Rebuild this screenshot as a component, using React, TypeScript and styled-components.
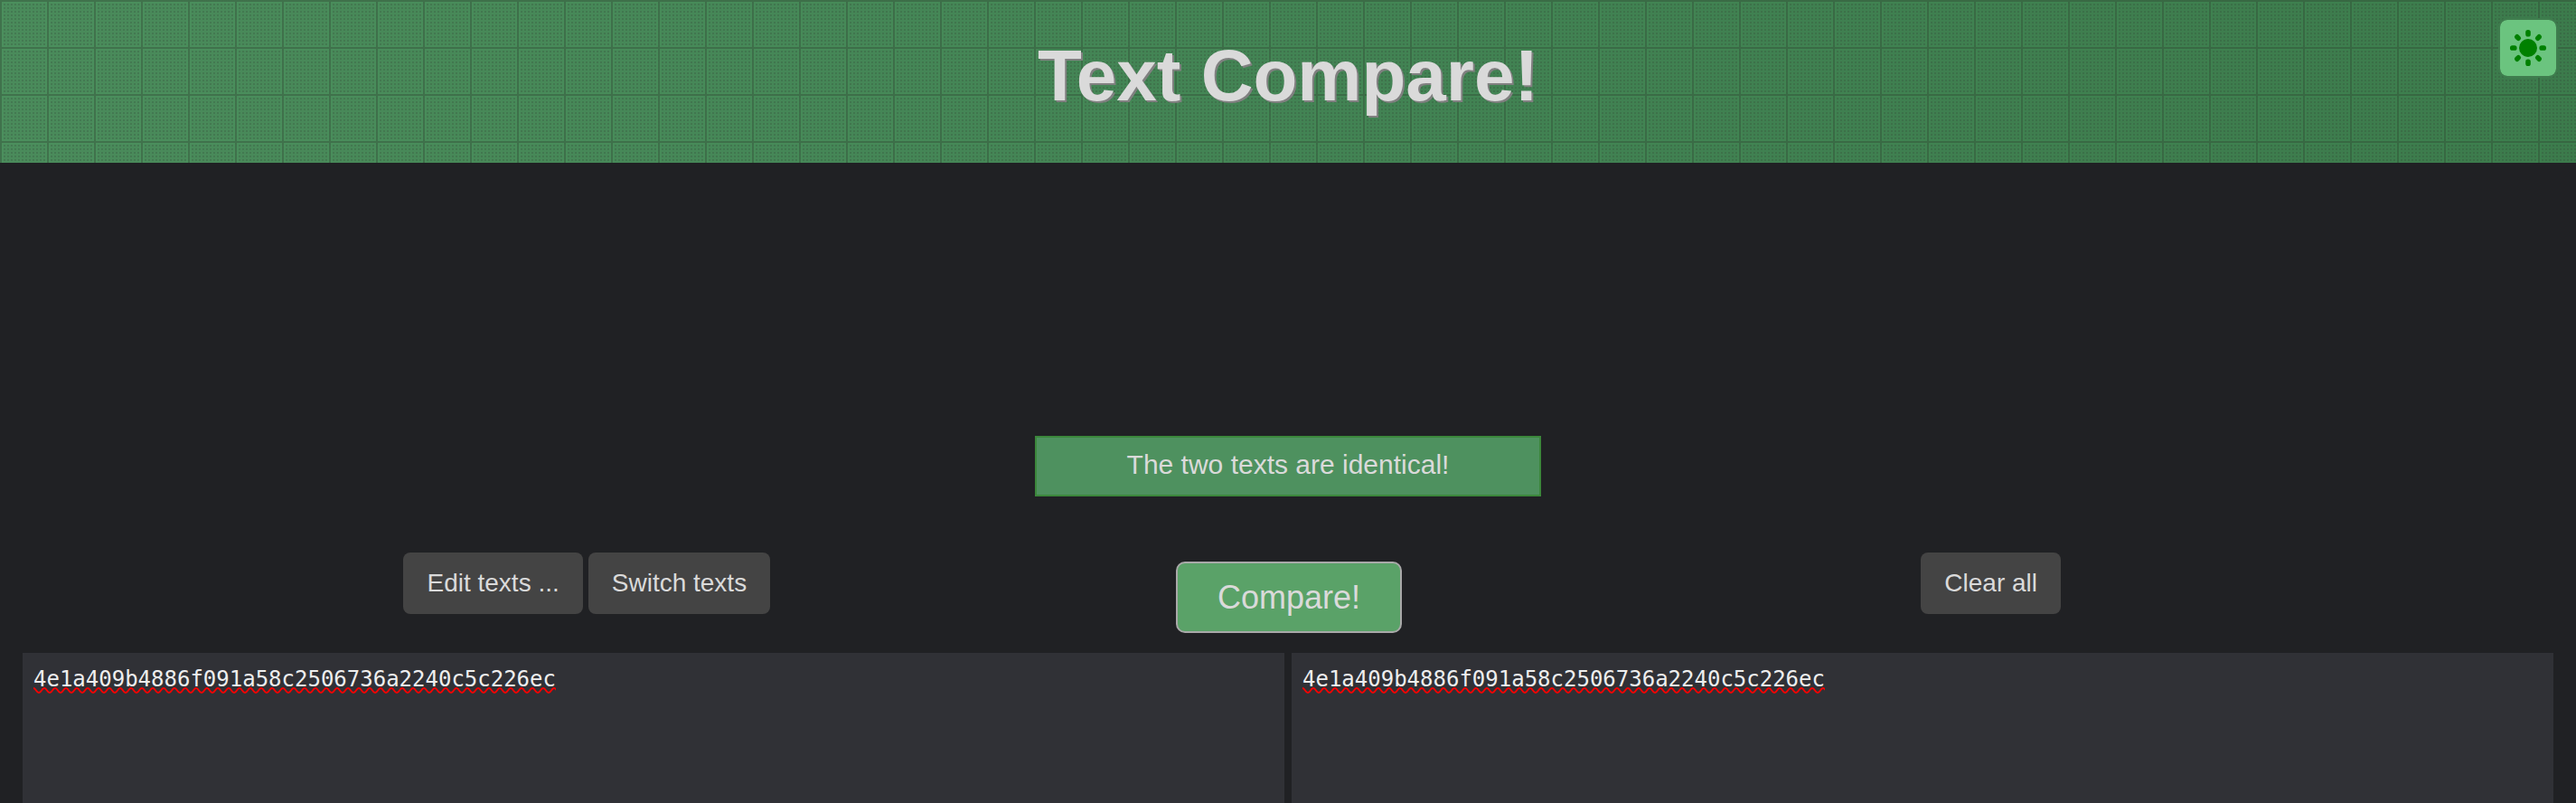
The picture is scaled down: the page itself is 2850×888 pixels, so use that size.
import React, { useState } from "react";
import styled, { createGlobalStyle } from "styled-components";

const GlobalStyle = createGlobalStyle`
  *, *::before, *::after { box-sizing: border-box; }
  body {
    margin: 0;
    background: #202124;
    color: #dadada;
    font-family: Arial, "Liberation Sans", sans-serif;
  }
`;

// One 52px cell of graph paper: two heavy rules and a 12 by 12 field of small squares.
const squares = Array.from({ length: 12 }, (_, row) =>
  Array.from({ length: 12 }, (_, col) => `M${4 + col * 4} ${4 + row * 4}h2v2h-2z`).join(""),
).join("");
const gridCell = encodeURIComponent(
  `<svg xmlns="http://www.w3.org/2000/svg" width="52" height="52" shape-rendering="crispEdges"><path fill="#2d3a2d" fill-opacity=".34" d="M0 0h52v2H2v50H0z"/><path fill="#2d3a2d" fill-opacity=".04" d="M4 4h46v46H4z"/><path fill="#2d3a2d" fill-opacity=".22" d="${squares}"/></svg>`,
);

// One period of the spelling squiggle.
const squiggle = encodeURIComponent(
  `<svg xmlns="http://www.w3.org/2000/svg" width="12" height="8"><path fill="none" stroke="#f00" stroke-width="1.8" d="M-6 6C-3 6-3 1 0 1S3 6 6 6 9 1 12 1 15 6 18 6"/></svg>`,
);

const Page = styled.div`
  display: flex;
  flex-direction: column;
  min-height: 100vh;
`;

const Header = styled.header`
  position: relative;
  padding: 38px 0 50px;
  background-image: url("data:image/svg+xml,${gridCell}"),
    linear-gradient(to right, #4b8f5d, #3c7e4d);
`;

const Title = styled.h1`
  margin: 0;
  font-size: 80px;
  line-height: 92px;
  text-align: center;
  text-shadow: 2px 2px 0 #808080;
`;

const ThemeButton = styled.button`
  position: absolute;
  top: 20px;
  right: 20px;
  display: grid;
  place-items: center;
  width: 66px;
  height: 66px;
  padding: 0;
  border: 2px solid #3f7d4e;
  border-radius: 10px;
  background: #6bc47f;
  background-clip: padding-box;
  color: #008000;
  cursor: pointer;
`;

const Main = styled.main`
  display: flex;
  flex: 1;
  flex-direction: column;
  padding: 302px 25px 0;
`;

const Message = styled.p`
  align-self: center;
  width: 560px;
  max-width: 100%;
  margin: 0 0 62px;
  padding: 13px 16px 16px;
  border: 2px solid #3b873b;
  background: #4e915f;
  font-size: 30px;
  line-height: 34px;
  text-align: center;
`;

const Toolbar = styled.div`
  display: grid;
  grid-template-columns: repeat(3, 1fr);
  align-items: start;
  margin-bottom: 22px;
  padding: 0 234px 0 236px;
`;

const ToolGroup = styled.div<{ $lowered?: boolean }>`
  display: flex;
  justify-content: center;
  gap: 6px;
  padding-top: ${(p) => (p.$lowered ? 10 : 0)}px;
`;

const Button = styled.button`
  padding: 18px 26px;
  border: 0;
  border-radius: 8px;
  background: #444;
  color: #dadada;
  font: 28px/32px Arial, "Liberation Sans", sans-serif;
  white-space: nowrap;
  cursor: pointer;
`;

const CompareButton = styled(Button)`
  padding: 18px 44px 17px;
  border: 2px solid #a9a9a9;
  border-radius: 10px;
  background: #5aa268;
  font-size: 36px;
  line-height: 40px;
`;

const Editors = styled.div`
  display: grid;
  grid-template-columns: 1fr 1fr;
  flex: 1;
  gap: 8px;
`;

const EditorFrame = styled.div`
  position: relative;
  display: flex;
  overflow: hidden;
  font: 24px/28px "DejaVu Sans Mono", monospace;
`;

const EditorInput = styled.textarea`
  flex: 1;
  min-height: 166px;
  padding: 15px 12px 0;
  border: 0;
  border-radius: 0;
  outline: 0;
  resize: none;
  background: #303136;
  color: #eee;
  font: inherit;
`;

const SpellingMark = styled.span`
  position: absolute;
  top: 38px;
  left: 12px;
  height: 8px;
  background: url("data:image/svg+xml,${squiggle}") repeat-x;
  pointer-events: none;
`;

const SunIcon = () => (
  <svg width="42" height="42" viewBox="-21 -21 42 42" fill="currentColor" aria-hidden="true">
    <circle r="10" />
    {[0, 45, 90, 135, 180, 225, 270, 315].map((angle) => (
      <rect key={angle} x="-2.8" y="-20" width="5.6" height="7.6" rx="2.6" transform={`rotate(${angle})`} />
    ))}
  </svg>
);

type EditorProps = { label: string; value: string; onChange: (value: string) => void };

const Editor = ({ label, value, onChange }: EditorProps) => (
  <EditorFrame>
    <EditorInput aria-label={label} spellCheck={false} value={value} onChange={(e) => onChange(e.target.value)} />
    <SpellingMark style={{ width: `${value.split("\n")[0].length}ch` }} />
  </EditorFrame>
);

const sample = "4e1a409b4886f091a58c2506736a2240c5c226ec";

export default function App() {
  const [left, setLeft] = useState(sample);
  const [right, setRight] = useState(sample);

  const switchTexts = () => {
    setLeft(right);
    setRight(left);
  };
  const clearAll = () => {
    setLeft("");
    setRight("");
  };

  return (
    <Page>
      <GlobalStyle />
      <Header>
        <Title>Text Compare!</Title>
        <ThemeButton type="button" aria-label="Switch colour theme">
          <SunIcon />
        </ThemeButton>
      </Header>
      <Main>
        <Message role="status">The two texts are identical!</Message>
        <Toolbar>
          <ToolGroup>
            <Button type="button">Edit texts ...</Button>
            <Button type="button" onClick={switchTexts}>Switch texts</Button>
          </ToolGroup>
          <ToolGroup $lowered>
            <CompareButton type="button">Compare!</CompareButton>
          </ToolGroup>
          <ToolGroup>
            <Button type="button" onClick={clearAll}>Clear all</Button>
          </ToolGroup>
        </Toolbar>
        <Editors>
          <Editor label="First text" value={left} onChange={setLeft} />
          <Editor label="Second text" value={right} onChange={setRight} />
        </Editors>
      </Main>
    </Page>
  );
}
